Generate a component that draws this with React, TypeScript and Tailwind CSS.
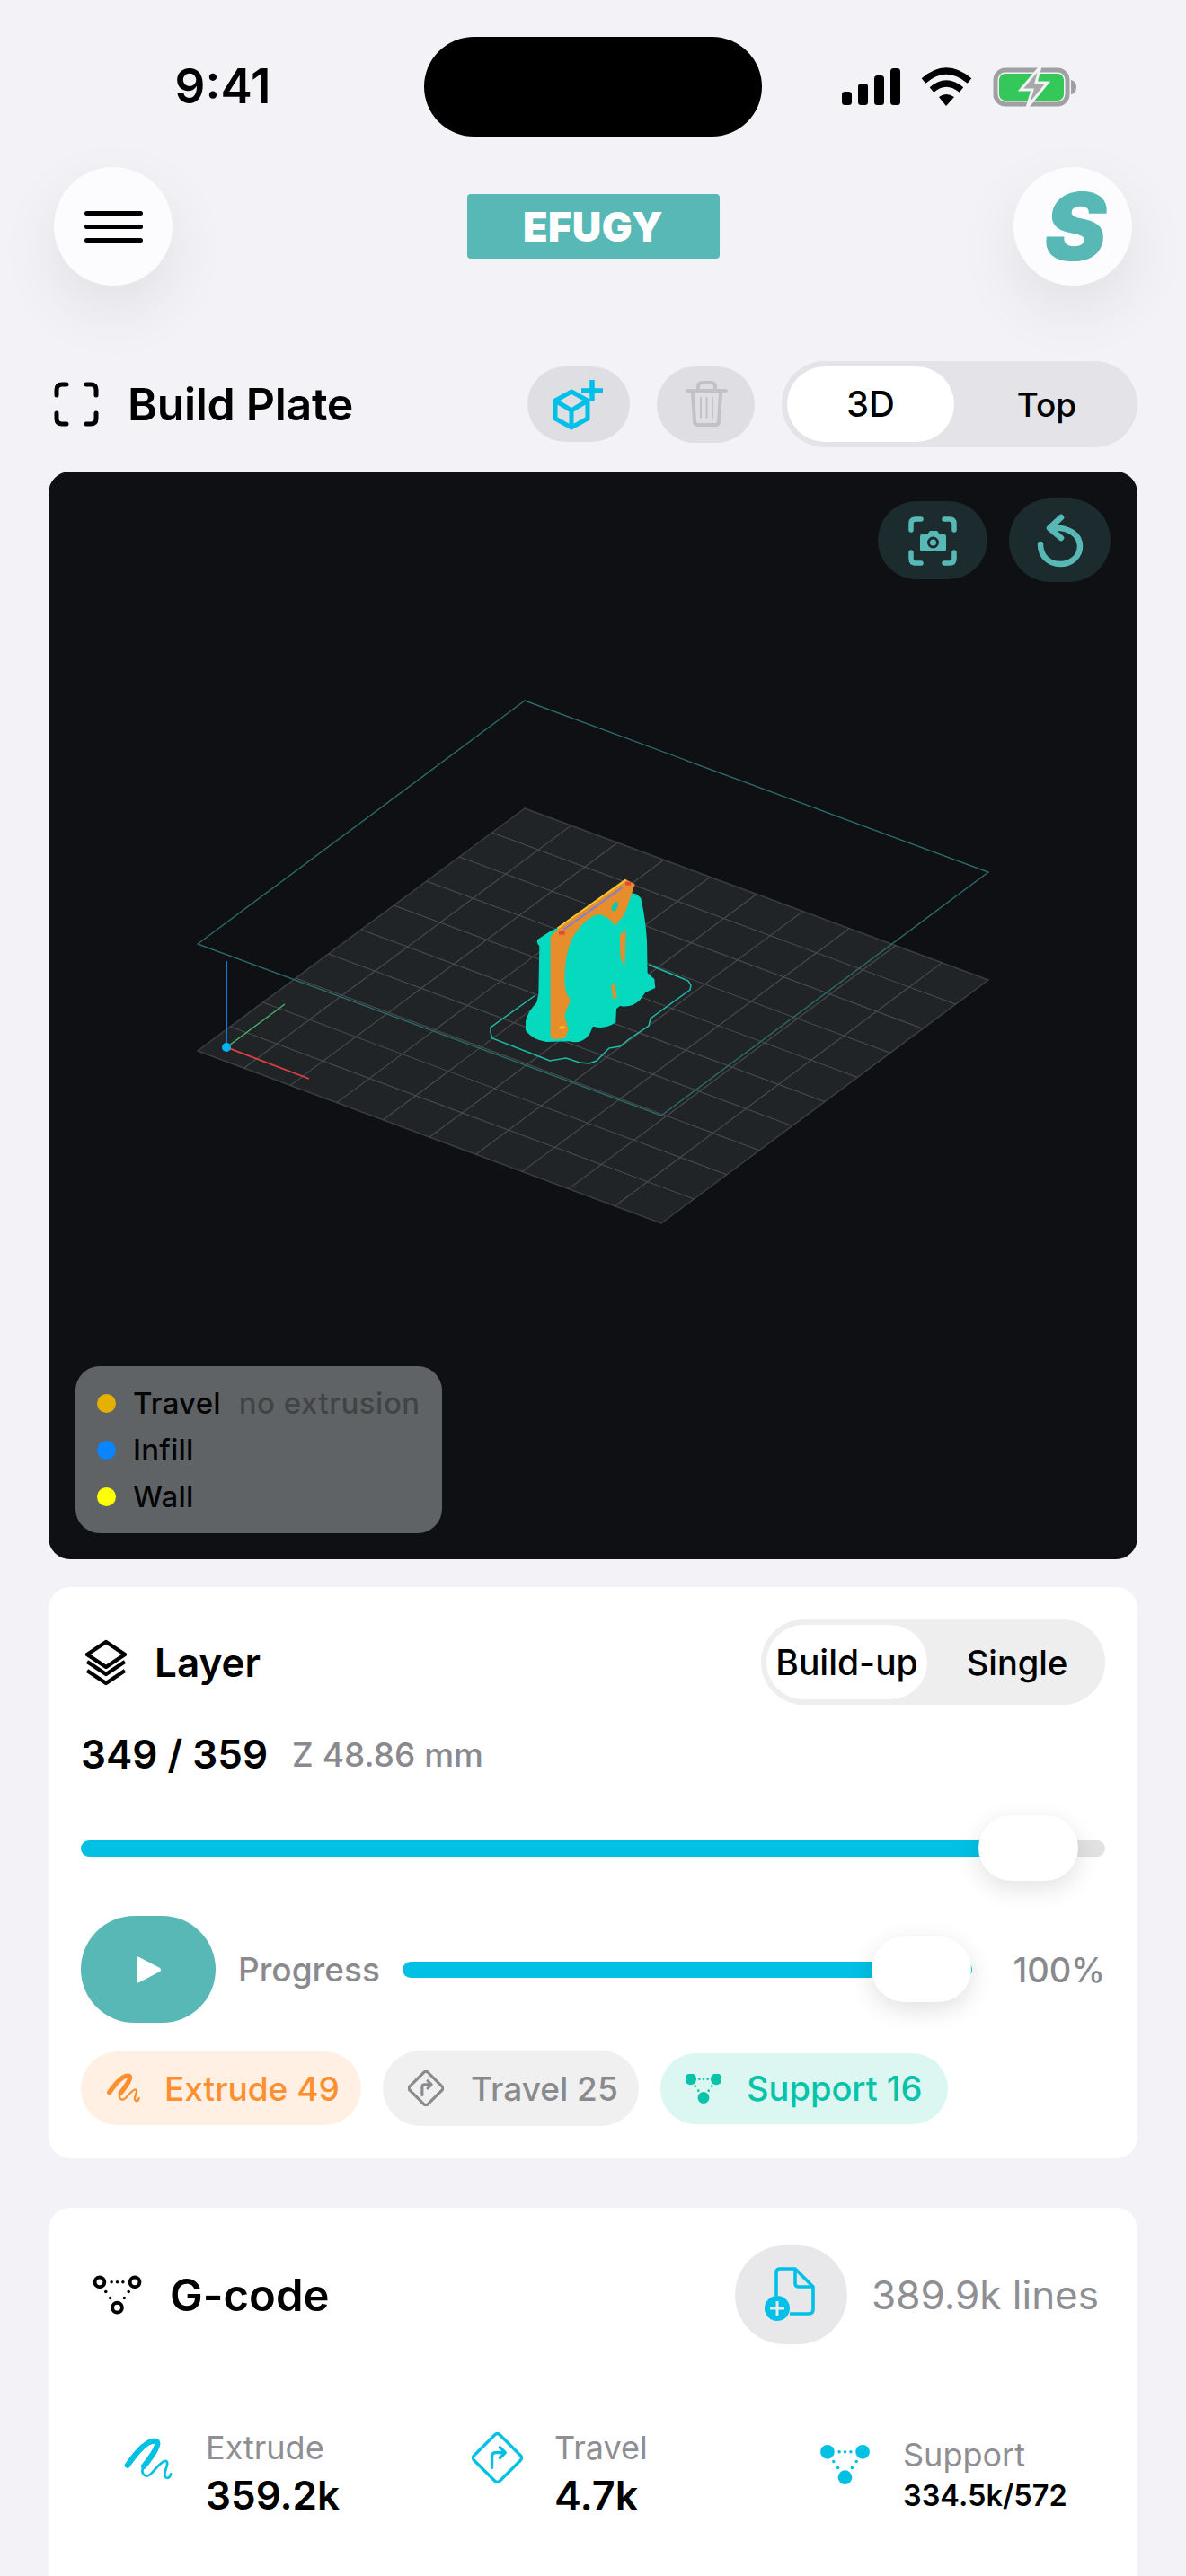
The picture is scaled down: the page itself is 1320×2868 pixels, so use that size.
import React from "react";

const CYAN = "#00c0e4";

function Scribble({ color, className, k = 1 }: { color: string; className: string; k?: number }) {
  return (
    <svg viewBox="0 0 56 50" className={className} fill="none" stroke={color} strokeLinecap="round" strokeLinejoin="round">
      <path d="M4 32 C13 19 26 3 36 4 C44 5 32 22 23 33" strokeWidth={6.5 * k} />
      <path d="M23 33 C18 41 25 48 31 42 C37 36 43 27 48 27 C53 28 47 37 47 42 C47 47 52 49 54 42" strokeWidth={2.8 * k} />
    </svg>
  );
}

function TurnSign({ color, className, sw = 3.4 }: { color: string; className: string; sw?: number }) {
  return (
    <svg viewBox="0 0 58 58" className={className} fill="none" stroke={color} strokeLinecap="round" strokeLinejoin="round" strokeWidth={sw}>
      <path d="M26 3 Q29 0 32 3 L55 26 Q58 29 55 32 L32 55 Q29 58 26 55 L3 32 Q0 29 3 26 Z" />
      <path d="M23 40 V27 Q23 23 27 23 H37" />
      <path d="M32 17 L38 23 L32 29" />
    </svg>
  );
}

function Nodes({ color, ring, className, r }: { color: string; ring?: boolean; className: string; r?: number }) {
  const p = ring ? { fill: "none", stroke: color, strokeWidth: 4 } : { fill: color };
  const rad = r ?? (ring ? 5.5 : 8);
  return (
    <svg viewBox="0 0 56 46" className={className}>
      <circle cx="8" cy="8" r={rad} {...p} />
      <circle cx="48" cy="8" r={rad} {...p} />
      <circle cx="28" cy="37" r={rad} {...p} />
      <g fill={color}>
        <circle cx="21.5" cy="8" r="1.8" /><circle cx="28" cy="8" r="1.8" /><circle cx="34.5" cy="8" r="1.8" />
        <circle cx="15" cy="19" r="1.8" /><circle cx="20" cy="26" r="1.8" />
        <circle cx="41" cy="19" r="1.8" /><circle cx="36" cy="26" r="1.8" />
      </g>
    </svg>
  );
}

function Scene() {
  const T: [number, number] = [584, 900], R: [number, number] = [1100, 1091], B: [number, number] = [736, 1362], L: [number, number] = [220, 1170];
  const lines = [];
  for (let i = 1; i < 10; i++) {
    const t = i / 10;
    lines.push(
      <line key={"a" + i} x1={T[0] + (R[0] - T[0]) * t} y1={T[1] + (R[1] - T[1]) * t} x2={L[0] + (B[0] - L[0]) * t} y2={L[1] + (B[1] - L[1]) * t} />,
      <line key={"b" + i} x1={T[0] + (L[0] - T[0]) * t} y1={T[1] + (L[1] - T[1]) * t} x2={R[0] + (B[0] - R[0]) * t} y2={R[1] + (B[1] - R[1]) * t} />
    );
  }
  return (
    <svg viewBox="54 525 1212 1211" className="absolute inset-0 w-full h-full">
      <polygon points="584,900 1100,1091 736,1362 220,1170" fill="#202427" stroke="#3a3d40" strokeWidth="1.5" />
      <g stroke="#484c4e" strokeWidth="1.1">{lines}</g>
      <polygon points="584,780 1100,971 736,1242 220,1051" fill="none" stroke="#2b6b69" strokeWidth="1.4" />
      <line x1="252" y1="1166" x2="252" y2="1070" stroke="#0a78d8" strokeWidth="2" />
      <line x1="252" y1="1166" x2="317" y2="1118" stroke="#46b26a" strokeWidth="1.4" />
      <line x1="252" y1="1166" x2="344" y2="1201" stroke="#e0403f" strokeWidth="1.8" />
      <circle cx="252" cy="1166" r="5" fill="#00b4f0" />
      <polyline
        points="722,1074 766,1092 769,1097 768,1102 724,1134 722,1142 700,1157 690,1165 678,1167 664,1181 656,1184 645,1183 630,1178 612,1181 602,1177 548,1156 546,1150 546,1144 596,1108"
        fill="none"
        stroke="#1fb8a4"
        strokeWidth="1.5"
      />
      <g transform="translate(500 950) scale(0.3333)">
        <path
          d="M335 262 L600 132 Q625 130 640 150 Q656 220 660 290 L662 400 L685 420 L688 450 L655 465 L637 490 Q610 518 570 510 L558 520 L556 565 Q520 590 480 578 L468 605 Q440 640 400 628 L325 630 Q280 625 255 592 L255 560 Q262 530 292 498 L298 470 L301 310 Q290 300 295 288 Z"
          fill="#05d9be"
        />
        <path
          d="M338 278 L360 255 L590 88 L620 103 L604 150 L585 205 L553 242 Q530 205 495 205 Q450 218 410 285 Q385 340 385 420 Q385 470 405 490 L385 540 L398 592 L385 618 L345 622 L338 610 Z"
          fill="#e58e2b"
        />
        <ellipse cx="553" cy="178" rx="9" ry="17" transform="rotate(25 553 178)" fill="#05c9b2" />
        <path d="M570 272 L590 255 L586 382 L571 345 Z" fill="#e58e2b" />
        <path d="M540 442 L552 436 L560 482 L548 488 Z" fill="#e58e2b" />
        <path d="M362 250 L590 88" stroke="#f7c531" strokeWidth="6" fill="none" />
        <path d="M382 255 L578 114" stroke="#7d80d8" strokeWidth="6" fill="none" />
        <rect x="366" y="260" width="20" height="12" fill="#e8463f" />
        <rect x="588" y="96" width="18" height="11" fill="#e8463f" />
        <rect x="368" y="578" width="18" height="8" fill="#f7c531" />
      </g>
    </svg>
  );
}

function Legend() {
  const rows = [
    { c: "bg-[#e6b000]", t: "Travel", s: "no extrusion" },
    { c: "bg-[#0a84ff]", t: "Infill", s: "" },
    { c: "bg-[#ffff00]", t: "Wall", s: "" },
  ];
  return (
    <div className="absolute left-[30px] bottom-[29px] w-[408px] h-[186px] rounded-[27px] bg-[#606365] pl-[24px] pt-[15px]">
      {rows.map((r) => (
        <div key={r.t} className="flex items-center h-[52px]">
          <span className={"w-[21px] h-[21px] rounded-full " + r.c} />
          <span className="ml-[19px] text-[33px] font-medium text-[#050505] leading-none tracking-[0.2px]">{r.t}</span>
          {r.s && <span className="ml-[20px] text-[33px] font-medium text-[#414345] leading-none tracking-[0.5px]">{r.s}</span>}
        </div>
      ))}
    </div>
  );
}

function Thumb({ className }: { className: string }) {
  return <div className={"absolute w-[111px] h-[73px] rounded-full bg-white shadow-[0_8px_28px_rgba(0,0,0,0.12)] " + className} />;
}

export default function App() {
  return (
    <div className="w-[1320px] h-[2868px] overflow-hidden bg-[#f2f2f7] font-['Inter',sans-serif] text-black">
      {/* status bar */}
      <div className="flex items-center pt-[41px] h-[152px]">
        <div className="w-[472px] pl-[24px] text-center text-[53px] font-semibold leading-none">9:41</div>
        <div className="w-[376px] h-[111px] rounded-full bg-black" />
        <div className="flex items-center pl-[89px]">
          <svg viewBox="937 74 262 46" className="w-[262px] h-[46px]">
            <g fill="#000">
              <rect x="937" y="102" width="11" height="15" rx="3.5" />
              <rect x="955" y="93" width="11" height="24" rx="3.5" />
              <rect x="973" y="84" width="11" height="33" rx="3.5" />
              <rect x="991" y="76" width="11" height="41" rx="3.5" />
            </g>
            <g fill="none" stroke="#000" strokeWidth="7">
              <path d="M1028 90 Q1053 68 1079 90" />
              <path d="M1037 100 Q1053 86 1070 100" />
            </g>
            <path d="M1045 108 Q1053 102 1062 108 L1053 118 Z" fill="#000" />
            <rect x="1108" y="78" width="80" height="38" rx="11" fill="none" stroke="#a0a0a2" strokeWidth="5" />
            <rect x="1112" y="82" width="72" height="30" rx="7" fill="#34c759" />
            <path d="M1192 89 Q1198 90 1198 97 Q1198 104 1192 105 Z" fill="#a0a0a2" />
            <path d="M1158 74 L1136 100 H1149 L1143 120 L1166 92 H1153 Z" fill="#a8a8a8" stroke="#f2f2f7" strokeWidth="3" />
          </svg>
        </div>
      </div>

      {/* app header */}
      <div className="flex items-center justify-between mt-[34px] px-[60px]">
        <button className="w-[132px] h-[132px] rounded-full bg-[#fcfcfe] flex flex-col items-center justify-center gap-[10px] shadow-[0_26px_70px_rgba(0,0,0,0.08)]">
          <span className="w-[65px] h-[5px] rounded-full bg-black" />
          <span className="w-[65px] h-[5px] rounded-full bg-black" />
          <span className="w-[65px] h-[5px] rounded-full bg-black" />
        </button>
        <div className="w-[281px] h-[72px] rounded-[4px] bg-[#57b8b5] flex items-center justify-center text-white font-black text-[45px] leading-none tracking-[0.5px]">
          EFUGY
        </div>
        <button className="w-[132px] h-[132px] rounded-full bg-[#fcfcfe] flex items-center justify-center shadow-[0_26px_70px_rgba(0,0,0,0.08)]">
          <span className="text-[104px] leading-none font-black italic text-[#57b8b5] ml-[6px]">S</span>
        </button>
      </div>

      {/* build plate row */}
      <div className="flex items-center mt-[84px] pl-[60px] pr-[54px] h-[96px]">
        <svg viewBox="0 0 50 50" className="w-[50px] h-[50px]" fill="none" stroke="#000" strokeWidth="5" strokeLinecap="round">
          <path d="M3 15 V9 Q3 3 9 3 H14 M36 3 H41 Q47 3 47 9 V15 M47 35 V41 Q47 47 41 47 H36 M14 47 H9 Q3 47 3 41 V35" />
        </svg>
        <span className="ml-[32px] text-[50px] font-semibold leading-none tracking-[-0.3px]">Build Plate</span>
        <button className="ml-auto w-[114px] h-[84px] rounded-full bg-[#dedee3] flex items-center justify-center">
          <svg viewBox="604 409 80 80" className="w-[80px] h-[80px]" fill="none" stroke="#00c0e8" strokeWidth="5">
            <path d="M636 435 L654 445 V465 L636 475 L618 465 V445 Z M618 445 L636 456 L654 445 M636 456 V475" />
            <path d="M659 422 V446 M647 434 H671" strokeWidth="5.5" />
          </svg>
        </button>
        <button className="ml-[30px] w-[109px] h-[85px] rounded-full bg-[#dedee3] flex items-center justify-center">
          <svg viewBox="745 409 80 80" className="w-[80px] h-[80px]" fill="none" stroke="#c2c2c6" strokeLinecap="round" strokeLinejoin="round">
            <path d="M764 434 H807 M776 433 V430 Q776 425 781 425 H790 Q795 425 795 430 V433" strokeWidth="4" />
            <path d="M770 436 L772 468 Q772 472 776 472 H795 Q799 472 799 468 L801 436" strokeWidth="4" />
            <path d="M779 442 V464 M785.5 442 V464 M792 442 V464" strokeWidth="2" />
          </svg>
        </button>
        <div className="ml-[30px] w-[396px] h-[96px] rounded-full bg-[#e3e3e8] p-[6px] flex items-center">
          <div className="w-[186px] h-[84px] rounded-full bg-white flex items-center justify-center text-[40px] font-medium leading-none">3D</div>
          <div className="flex-1 flex items-center justify-center text-[37px] font-medium leading-none pl-[8px]">Top</div>
        </div>
      </div>

      {/* viewer */}
      <div className="relative mt-[27px] mx-[54px] h-[1211px] rounded-[24px] bg-[#0e1014] overflow-hidden">
        <Scene />
        <div className="absolute top-[30px] right-[30px] flex items-center gap-[24px]">
          <button className="w-[122px] h-[87px] rounded-full bg-[#1c2c2e] flex items-center justify-center">
            <svg viewBox="1008 571 60 60" className="w-[60px] h-[60px]" fill="none" stroke="#57b8b5" strokeWidth="5.5" strokeLinecap="round">
              <path d="M1014 589 V582 Q1014 577 1019 577 H1025 M1051 577 H1057 Q1062 577 1062 582 V589 M1062 614 V621 Q1062 626 1057 626 H1051 M1025 626 H1019 Q1014 626 1014 621 V614" />
              <path d="M1026 594 H1032 L1035 590 H1043 L1046 594 H1051 Q1053 594 1053 596 V611 Q1053 613 1051 613 H1026 Q1024 613 1024 611 V596 Q1024 594 1026 594 Z" fill="#57b8b5" stroke="none" />
              <circle cx="1038.5" cy="603" r="5" fill="#57b8b5" stroke="#1c2c2e" strokeWidth="3" />
            </svg>
          </button>
          <button className="w-[113px] h-[93px] rounded-full bg-[#1c2c2e] flex items-center justify-center">
            <svg viewBox="1150 572 60 60" className="w-[60px] h-[60px]" fill="none" stroke="#57b8b5" strokeWidth="6.5" strokeLinecap="round" strokeLinejoin="round">
              <path d="M1181 576 L1168 588 L1181 599" />
              <path d="M1170 588 C1190 586 1202 596 1202 608 C1202 620 1192 628 1180 628 C1168 628 1158 620 1158 606" />
            </svg>
          </button>
        </div>
        <Legend />
      </div>

      {/* layer card */}
      <div className="mt-[31px] mx-[54px] h-[636px] rounded-[24px] bg-white pt-[36px] px-[36px]">
        <div className="flex items-center h-[95px]">
          <svg viewBox="95 1826 46 52" className="ml-[5px] w-[46px] h-[52px]" fill="none" stroke="#000" strokeWidth="4.5" strokeLinejoin="round">
            <path d="M118 1829 L139 1843 L118 1857 L97 1843 Z" />
            <path d="M97 1851 L118 1865 L139 1851" />
            <path d="M97 1861 L118 1875 L139 1861" />
          </svg>
          <span className="ml-[31px] text-[44px] font-semibold leading-none">Layer</span>
          <div className="ml-auto w-[383px] h-[95px] rounded-full bg-[#eeeeee] p-[6px] flex items-center">
            <div className="w-[179px] h-[83px] rounded-full bg-white flex items-center justify-center text-[39px] font-medium leading-none">Build-up</div>
            <div className="flex-1 flex items-center justify-center text-[38px] font-medium leading-none pl-[8px]">Single</div>
          </div>
        </div>
        <div className="flex items-center mt-[25px] h-[60px]">
          <span className="text-[44px] font-semibold leading-none">349 / 359</span>
          <span className="ml-[27px] text-[37px] font-medium text-[#8a8a8e] leading-none">Z 48.86 mm</span>
        </div>
        <div className="relative mt-[38px] h-[73px] flex items-center">
          <div className="w-full h-[18px] rounded-full bg-[#e2e2e2] overflow-hidden">
            <div className="w-[1010px] h-full bg-[#00c0e4]" />
          </div>
          <Thumb className="left-[999px] top-0" />
        </div>
        <div className="flex items-center mt-[39px] h-[119px]">
          <button className="w-[150px] h-[119px] rounded-full bg-[#57b8b5] flex items-center justify-center">
            <svg viewBox="0 0 30 32" className="w-[30px] h-[32px]">
              <path d="M2 3 Q2 0 5 2 L28 14 Q30 16 28 18 L5 30 Q2 32 2 29 Z" fill="#fff" />
            </svg>
          </button>
          <span className="ml-[25px] text-[37px] font-medium text-[#8a8a8e] leading-none">Progress</span>
          <div className="relative ml-[25px] w-[634px] h-[73px] flex items-center">
            <div className="w-full h-[18px] rounded-full bg-[#00c0e4]" />
            <Thumb className="left-[522px] top-0" />
          </div>
          <span className="ml-auto text-[38px] font-medium text-[#8a8a8e] leading-none">100%</span>
        </div>
        <div className="flex items-center mt-[31px] h-[84px]">
          <div className="w-[312px] h-[82px] rounded-full bg-[#fff0e3] flex items-center pl-[29px]">
            <Scribble color="#ff8f2e" className="w-[37px] h-[34px]" k={1.25} />
            <span className="ml-[27px] text-[37px] font-medium text-[#ff8f2e] leading-none">Extrude 49</span>
          </div>
          <div className="ml-[24px] w-[285px] h-[84px] rounded-full bg-[#f0f0f0] flex items-center pl-[28px]">
            <TurnSign color="#8a8a8e" className="w-[40px] h-[40px]" sw={4.5} />
            <span className="ml-[30px] text-[37px] font-medium text-[#8a8a8e] leading-none">Travel 25</span>
          </div>
          <div className="ml-[24px] w-[320px] h-[79px] rounded-full bg-[#dcf6f2] flex items-center pl-[28px]">
            <Nodes color="#07c3a9" className="w-[40px] h-[33px]" r={9} />
            <span className="ml-[28px] text-[38px] font-medium text-[#07c3a9] leading-none">Support 16</span>
          </div>
        </div>
      </div>

      {/* g-code card */}
      <div className="mt-[55px] mx-[54px] h-[500px] rounded-[24px] bg-white pt-[42px]">
        <div className="flex items-center h-[110px] pl-[49px] pr-[43px]">
          <Nodes color="#000" ring className="w-[55px] h-[45px]" />
          <span className="ml-[31px] text-[49px] font-semibold leading-none">G-code</span>
          <button className="ml-auto w-[125px] h-[110px] rounded-full bg-[#e8e8ea] flex items-center justify-center">
            <svg viewBox="845 2520 70 70" className="w-[70px] h-[70px]" fill="none" stroke="#00c0e8" strokeWidth="3.6" strokeLinejoin="round">
              <path d="M863 2556 V2530 Q863 2526 867 2526 H884 L904 2546 V2571 Q904 2576 899 2576 H878" />
              <path d="M884 2526 V2542 Q884 2546 888 2546 H904" />
              <circle cx="864" cy="2570" r="14" fill="#00c0e8" stroke="none" />
              <path d="M856 2570 H872 M864 2562 V2578" stroke="#e8e8ea" strokeWidth="3" />
            </svg>
          </button>
          <span className="ml-[27px] text-[44px] text-[#8e8e93] leading-none">389.9k lines</span>
        </div>
        <div className="grid grid-cols-[387px_388px_1fr] mt-[90px] pl-[84px]">
          <div className="flex items-start">
            <Scribble color={CYAN} className="mt-[13px] w-[54px] h-[50px]" />
            <div className="ml-[37px]">
              <div className="h-[50px] flex items-center text-[36px] text-[#8e8e93] leading-none">Extrude</div>
              <div className="h-[56px] flex items-center text-[44px] font-semibold leading-none">359.2k</div>
            </div>
          </div>
          <div className="flex items-start">
            <TurnSign color={CYAN} className="mt-[8px] w-[57px] h-[57px]" />
            <div className="ml-[35px]">
              <div className="h-[50px] flex items-center text-[36px] text-[#8e8e93] leading-none">Travel</div>
              <div className="h-[56px] flex items-center text-[45px] font-semibold leading-none">4.7k</div>
            </div>
          </div>
          <div className="flex items-start">
            <Nodes color={CYAN} className="mt-[22px] w-[55px] h-[45px]" />
            <div className="ml-[37px] pt-[8px]">
              <div className="h-[50px] flex items-center text-[36px] text-[#8e8e93] leading-none">Support</div>
              <div className="h-[42px] flex items-center text-[32.5px] font-semibold leading-none">334.5k/572</div>
            </div>
          </div>
        </div>
      </div>
    </div>
  );
}
